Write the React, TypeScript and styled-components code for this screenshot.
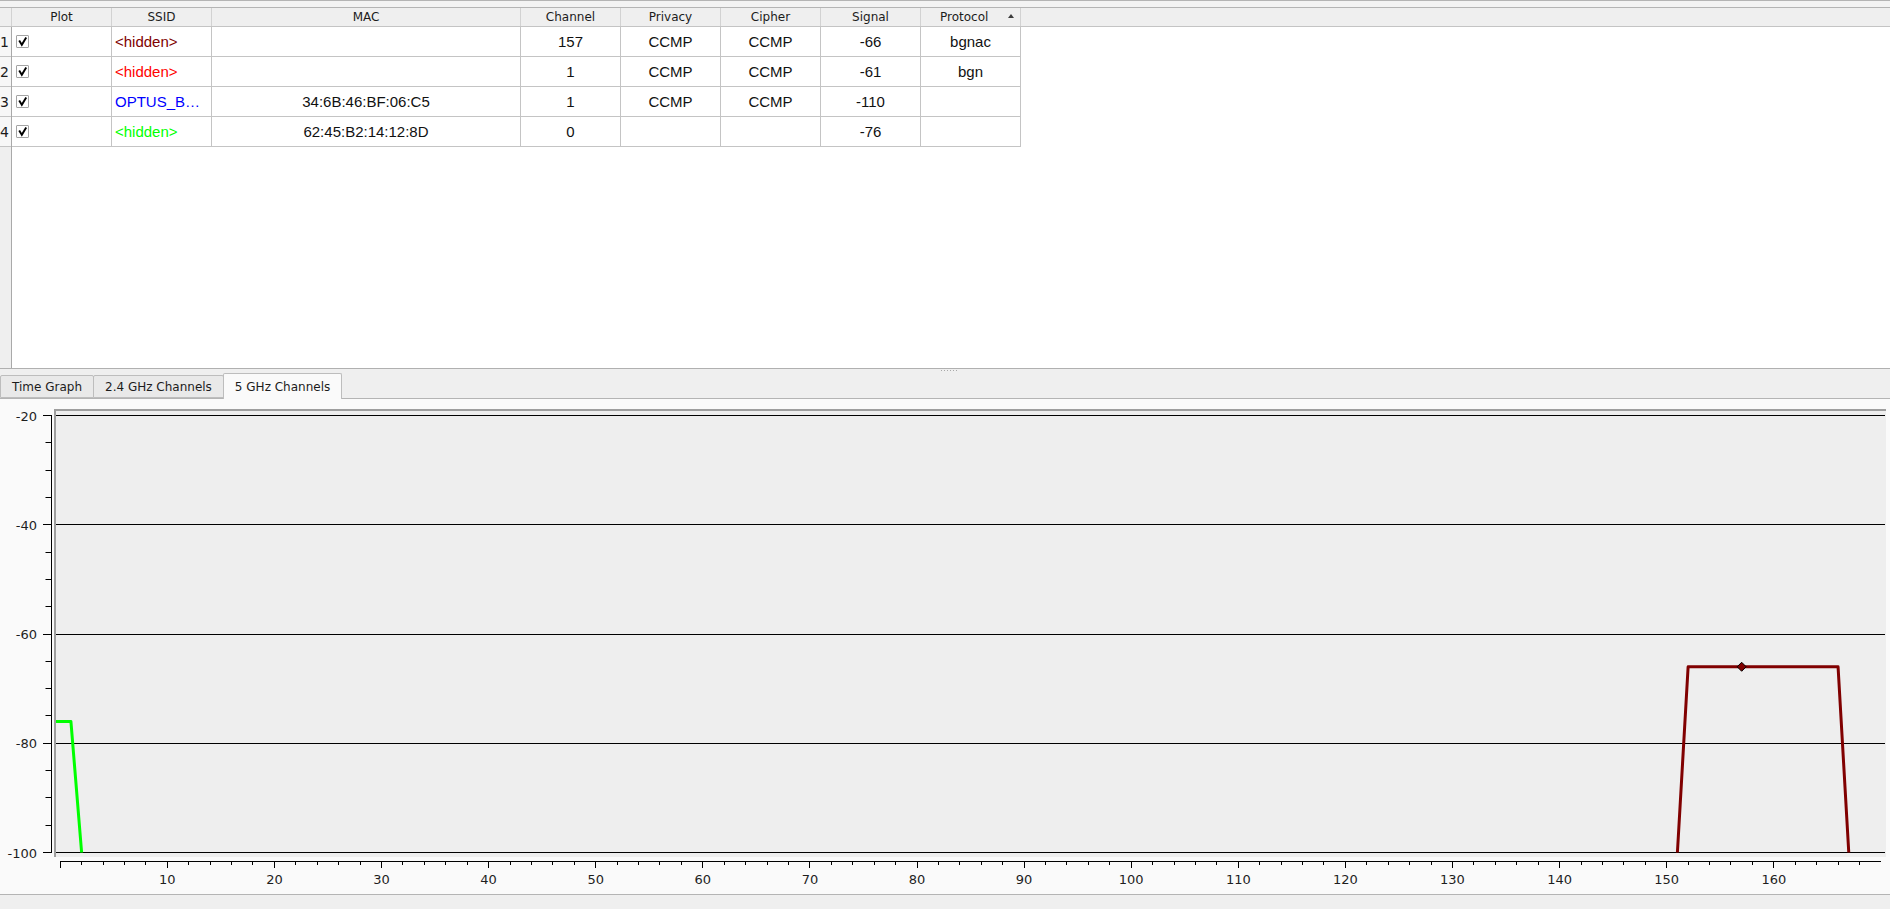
import styled, { createGlobalStyle } from "styled-components";

const GlobalStyle = createGlobalStyle`
    body {
        margin: 0;
        background: #efefef;
    }
`

const Page = styled.div`
    width: 1890px;
    height: 909px;
    display: flex;
    flex-direction: column;
    background: #efefef;
    font-family: "DejaVu Sans", "Noto Sans", sans-serif;
    color: #1c1c1c;
    overflow: hidden;
`
const TopStrip = styled.div`
    height: 8px;
    box-sizing: border-box;
    border-top: 1px solid #b4b4b4;
    border-bottom: 1px solid #b4b4b4;
    background: #f3f3f3;
`
const TableView = styled.div`
    height: 361px;
    box-sizing: border-box;
    border-bottom: 1px solid #b0b0b0;
    display: flex;
    flex-direction: column;
    background: #ffffff;
`
const HeaderRow = styled.div`
    display: grid;
    grid-template-columns: 12px 100px 100px 309px repeat(5, 100px) 1fr;
    height: 19px;
    box-sizing: border-box;
    border-bottom: 1px solid #c4c4c4;
    background: #efefef;
`
const HeaderCell = styled.div<{ $sorted?: boolean; $last?: boolean }>`
    display: flex;
    align-items: center;
    justify-content: ${p => (p.$sorted ? "flex-start" : "center")};
    gap: 20px;
    padding-left: ${p => (p.$sorted ? "19px" : "0")};
    box-sizing: border-box;
    border-right: ${p => (p.$last ? "none" : "1px solid #d2d2d2")};
    font-size: 12px;
    white-space: nowrap;
`
const SortArrow = styled.span`
    width: 0;
    height: 0;
    border-left: 3.5px solid transparent;
    border-right: 3.5px solid transparent;
    border-bottom: 4px solid #3c3c3c;
    margin-top: -2px;
`
const Body = styled.div`
    flex: 1;
    display: flex;
`
const RowHeaders = styled.div`
    width: 12px;
    box-sizing: border-box;
    border-right: 1px solid #a9a9a9;
    background: #efefef;
    display: flex;
    flex-direction: column;
`
const RowNumber = styled.div`
    height: 30px;
    box-sizing: border-box;
    border-bottom: 1px solid #c4c4c4;
    background: #f7f7f7;
    display: flex;
    align-items: center;
    font-size: 14px;
    overflow: hidden;
`
const DataGrid = styled.div`
    display: grid;
    grid-template-columns: 100px 100px 309px repeat(5, 100px);
    grid-auto-rows: 30px;
    align-content: start;
`
const Cell = styled.div<{ $left?: boolean; $color?: string }>`
    display: flex;
    align-items: center;
    justify-content: ${p => (p.$left ? "flex-start" : "center")};
    padding-left: ${p => (p.$left ? "3px" : "0")};
    box-sizing: border-box;
    border-right: 1px solid #c4c4c4;
    border-bottom: 1px solid #c4c4c4;
    font-family: "Liberation Sans", Arial, sans-serif;
    font-size: 15px;
    color: ${p => p.$color ?? "#111111"};
    white-space: nowrap;
    overflow: hidden;
`
const CheckCell = styled(Cell)`
    padding-left: 4px;
`
const CheckBox = styled.span`
    width: 13px;
    height: 13px;
    box-sizing: border-box;
    border: 1px solid #a4a4a4;
    border-radius: 1px;
    background: #ffffff;
    display: flex;
`
const Splitter = styled.div`
    height: 4px;
    display: flex;
    justify-content: center;
    padding-left: 8px;
    padding-top: 1px;
    box-sizing: border-box;
    background: #efefef;
`
const SplitterGrip = styled.span`
    width: 17px;
    height: 1px;
    background: repeating-linear-gradient(to right, #a8a8a8 0 1px, transparent 1px 3px);
`
const TabBar = styled.div`
    height: 26px;
    box-sizing: border-box;
    border-bottom: 1px solid #b4b4b4;
    display: flex;
    align-items: flex-end;
    background: #efefef;
`
const Tab = styled.div<{ $active?: boolean }>`
    height: ${p => (p.$active ? "26px" : "23px")};
    margin-bottom: ${p => (p.$active ? "-1px" : "0")};
    padding: 1px 11px 0 11px;
    box-sizing: border-box;
    border: 1px solid #bdbdbd;
    border-bottom: ${p => (p.$active ? "none" : "1px solid #bdbdbd")};
    border-radius: 2px 2px 0 0;
    background: ${p => (p.$active ? "#fafafa" : "#e9e9e9")};
    display: flex;
    align-items: center;
    font-size: 12px;
    white-space: nowrap;
    & + & {
        margin-left: -1px;
    }
`
const ChartPane = styled.div`
    height: 496px;
    box-sizing: border-box;
    border-bottom: 1px solid #b4b4b4;
    background: #fafafa;
`
const StatusStrip = styled.div`
    flex: 1;
    background: #efefef;
`

type Network = {
    ssid: string
    color: string
    mac: string
    channel: string
    privacy: string
    cipher: string
    signal: string
    protocol: string
}

const networks: Network[] = [
    { ssid: "<hidden>", color: "#800000", mac: "", channel: "157", privacy: "CCMP", cipher: "CCMP", signal: "-66", protocol: "bgnac" },
    { ssid: "<hidden>", color: "#ff0000", mac: "", channel: "1", privacy: "CCMP", cipher: "CCMP", signal: "-61", protocol: "bgn" },
    { ssid: "OPTUS_B…", color: "#0000ff", mac: "34:6B:46:BF:06:C5", channel: "1", privacy: "CCMP", cipher: "CCMP", signal: "-110", protocol: "" },
    { ssid: "<hidden>", color: "#00ff00", mac: "62:45:B2:14:12:8D", channel: "0", privacy: "", cipher: "", signal: "-76", protocol: "" },
]

const columns = ["Plot", "SSID", "MAC", "Channel", "Privacy", "Cipher", "Signal"]

const Check = () => (
    <svg width="11" height="11" viewBox="0 0 11 11">
        <path d="M2.2 4.6 L4.8 8.8 L9.2 1.4" fill="none" stroke="#000" strokeWidth="1.9" strokeLinejoin="miter" />
    </svg>
)

// channel / dBm -> chart pixels
const chX = (c: number) => 60.2 + 10.71 * c
const dbY = (v: number) => 16.5 + ((-20 - v) * 437) / 80
const crisp = (n: number) => Math.floor(n) + 0.5

const PLOT = { x: 56, y: 12, w: 1830, h: 446 }

const ChannelChart = () => {
    const yTicks: number[] = []
    for (let v = -20; v >= -100; v -= 5) yTicks.push(v)
    const xTicks: number[] = []
    for (let c = 0; c <= 168; c += 2) xTicks.push(c)
    const grid = [-20, -40, -60, -80, -100]

    const red = [[151, -100], [152, -66], [166, -66], [167, -100]]
        .map(([c, v]) => `${chX(c)},${dbY(v)}`).join(" ")
    const green = [[-5, -76], [1, -76], [2, -100]]
        .map(([c, v]) => `${chX(c)},${dbY(v)}`).join(" ")
    const dx = chX(157)
    const dy = dbY(-66)

    return (
        <svg width="1890" height="495" style={{ display: "block" }} fontFamily="DejaVu Sans, sans-serif" fontSize="13">
            <defs>
                <clipPath id="plotClip">
                    <rect x={PLOT.x} y={PLOT.y} width={PLOT.w} height={PLOT.h} />
                </clipPath>
            </defs>
            <rect x={54} y={10} width={PLOT.w + 2} height={PLOT.h + 2} fill="#9e9e9e" />
            <rect x={PLOT.x} y={PLOT.y} width={PLOT.w} height={PLOT.h} fill="#eeeeee" />

            {grid.map(v => (
                <line key={v} x1={PLOT.x} x2={1885} y1={crisp(dbY(v))} y2={crisp(dbY(v))} stroke="#000" strokeWidth="1" />
            ))}

            <g clipPath="url(#plotClip)" fill="none" strokeWidth="3" strokeLinejoin="round">
                <polyline points={green} stroke="#00ff00" />
                <polyline points={red} stroke="#800000" />
                <path d={`M${dx} ${dy - 4.5} L${dx + 4.5} ${dy} L${dx} ${dy + 4.5} L${dx - 4.5} ${dy} Z`} fill="#800000" stroke="#000" strokeWidth="1" />
            </g>

            {/* y axis */}
            <line x1={51.5} x2={51.5} y1={16} y2={454} stroke="#000" />
            {yTicks.map(v => (
                <line key={v} x1={v % 20 === 0 ? 43 : 45.5} x2={51.5} y1={crisp(dbY(v))} y2={crisp(dbY(v))} stroke="#000" />
            ))}
            {grid.map(v => (
                <text key={v} x={37} y={dbY(v) + 5} textAnchor="end" fill="#1e1e1e">{v}</text>
            ))}

            {/* x axis */}
            <line x1={60} x2={1881} y1={462.5} y2={462.5} stroke="#000" />
            {xTicks.map(c => (
                <line key={c} x1={crisp(chX(c))} x2={crisp(chX(c))} y1={462.5} y2={c % 10 === 0 ? 469 : 466} stroke="#000" />
            ))}
            {xTicks.filter(c => c % 10 === 0 && c > 0).map(c => (
                <text key={c} x={chX(c)} y={485} textAnchor="middle" fill="#1e1e1e">{c}</text>
            ))}
        </svg>
    )
}

export default function App() {
    return (
        <Page>
            <GlobalStyle />
            <TopStrip />
            <TableView>
                <HeaderRow>
                    <HeaderCell />
                    {columns.map(c => <HeaderCell key={c}>{c}</HeaderCell>)}
                    <HeaderCell $sorted>Protocol<SortArrow /></HeaderCell>
                    <HeaderCell $last />
                </HeaderRow>
                <Body>
                    <RowHeaders>
                        {networks.map((_, i) => <RowNumber key={i}>{i + 1}</RowNumber>)}
                    </RowHeaders>
                    <DataGrid>
                        {networks.map((n, i) => (
                            <>
                                <CheckCell key={`p${i}`} $left><CheckBox><Check /></CheckBox></CheckCell>
                                <Cell key={`s${i}`} $left $color={n.color}>{n.ssid}</Cell>
                                <Cell key={`m${i}`}>{n.mac}</Cell>
                                <Cell key={`c${i}`}>{n.channel}</Cell>
                                <Cell key={`v${i}`}>{n.privacy}</Cell>
                                <Cell key={`x${i}`}>{n.cipher}</Cell>
                                <Cell key={`g${i}`}>{n.signal}</Cell>
                                <Cell key={`r${i}`}>{n.protocol}</Cell>
                            </>
                        ))}
                    </DataGrid>
                </Body>
            </TableView>
            <Splitter><SplitterGrip /></Splitter>
            <TabBar>
                <Tab>Time Graph</Tab>
                <Tab>2.4 GHz Channels</Tab>
                <Tab $active>5 GHz Channels</Tab>
            </TabBar>
            <ChartPane>
                <ChannelChart />
            </ChartPane>
            <StatusStrip />
        </Page>
    )
}
